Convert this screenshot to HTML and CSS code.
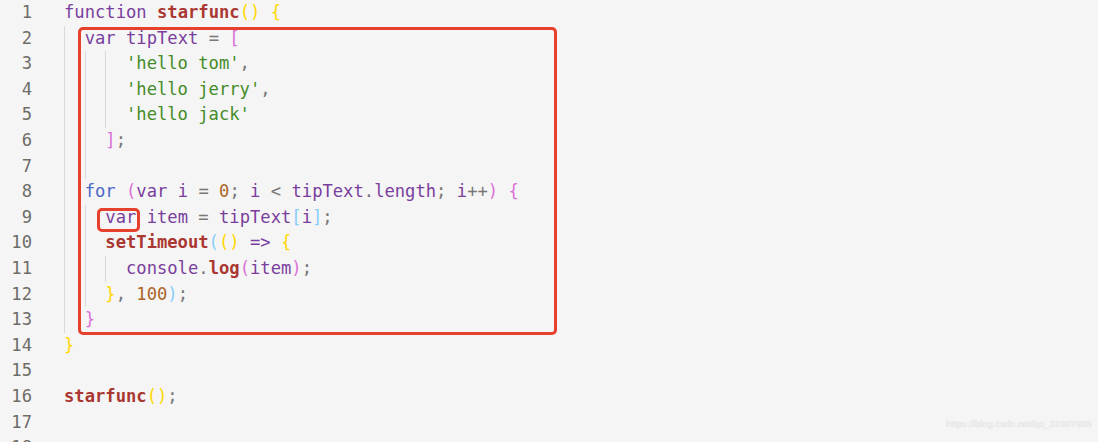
FILE: index.html
```html
<!DOCTYPE html>
<html>
<head>
<meta charset="utf-8">
<link rel="stylesheet" href="styles.css">
</head>
<body>
<div class="editor">
  <div class="ln"><span class="no">1</span><span class="code"><span class="kw">function</span> <span class="fn">starfunc</span><span class="b1">()</span> <span class="b1">{</span></span></div>
  <div class="ln"><span class="no">2</span><span class="code"><span class="ind">  </span><span class="kw">var</span> <span class="kw">tipText</span> <span class="op">=</span> <span class="b2">[</span></span></div>
  <div class="ln"><span class="no">3</span><span class="code"><span class="ind">  </span><span class="ind">  </span><span class="ind">  </span><span class="str">'hello tom'</span><span class="op">,</span></span></div>
  <div class="ln"><span class="no">4</span><span class="code"><span class="ind">  </span><span class="ind">  </span><span class="ind">  </span><span class="str">'hello jerry'</span><span class="op">,</span></span></div>
  <div class="ln"><span class="no">5</span><span class="code"><span class="ind">  </span><span class="ind">  </span><span class="ind">  </span><span class="str">'hello jack'</span></span></div>
  <div class="ln"><span class="no">6</span><span class="code"><span class="ind">  </span><span class="ind">  </span><span class="b2">]</span><span class="op">;</span></span></div>
  <div class="ln"><span class="no">7</span><span class="code"><span class="ind">  </span><span class="ind">  </span></span></div>
  <div class="ln"><span class="no">8</span><span class="code"><span class="ind">  </span><span class="ctl">for</span> <span class="b2">(</span><span class="kw">var</span> <span class="kw">i</span> <span class="op">=</span> <span class="num">0</span><span class="op">;</span> <span class="kw">i</span> <span class="op">&lt;</span> <span class="kw">tipText</span><span class="op">.</span><span class="kw">length</span><span class="op">;</span> <span class="kw">i</span><span class="op">++</span><span class="b2">)</span> <span class="b2">{</span></span></div>
  <div class="ln"><span class="no">9</span><span class="code"><span class="ind">  </span><span class="ind">  </span><span class="kw">var</span> <span class="kw">item</span> <span class="op">=</span> <span class="kw">tipText</span><span class="b3">[</span><span class="kw">i</span><span class="b3">]</span><span class="op">;</span></span></div>
  <div class="ln"><span class="no">10</span><span class="code"><span class="ind">  </span><span class="ind">  </span><span class="fn">setTimeout</span><span class="b3">(</span><span class="b1">()</span> <span class="kw">=&gt;</span> <span class="b1">{</span></span></div>
  <div class="ln"><span class="no">11</span><span class="code"><span class="ind">  </span><span class="ind">  </span><span class="ind">  </span><span class="kw">console</span><span class="op">.</span><span class="fn">log</span><span class="b2">(</span><span class="kw">item</span><span class="b2">)</span><span class="op">;</span></span></div>
  <div class="ln"><span class="no">12</span><span class="code"><span class="ind">  </span><span class="ind">  </span><span class="b1">}</span><span class="op">,</span> <span class="num">100</span><span class="b3">)</span><span class="op">;</span></span></div>
  <div class="ln"><span class="no">13</span><span class="code"><span class="ind">  </span><span class="b2">}</span></span></div>
  <div class="ln"><span class="no">14</span><span class="code"><span class="b1">}</span></span></div>
  <div class="ln"><span class="no">15</span><span class="code"></span></div>
  <div class="ln"><span class="no">16</span><span class="code"><span class="fn">starfunc</span><span class="b1">()</span><span class="op">;</span></span></div>
  <div class="ln"><span class="no">17</span><span class="code"></span></div>
  <div class="ln"><span class="no">18</span><span class="code"></span></div>
  <div class="mark mark-big"></div>
  <div class="mark mark-small"></div>
  <div class="watermark">https://blog.csdn.net/qq_31907985</div>
</div>
</body>
</html>
```

FILE: styles.css
```css
html, body {
  margin: 0;
  padding: 0;
  background: #f5f5f5;
  overflow: hidden;
}

.editor {
  position: relative;
  width: 1098px;
  height: 442px;
  overflow: hidden;
  font-family: "DejaVu Sans Mono", monospace;
  font-size: 17.16px;
  line-height: 25.6px;
  color: #777777;
}

.ln {
  display: flex;
  height: 25.6px;
}

.no {
  width: 32px;
  flex: none;
  text-align: right;
  color: #6d6d68;
}

.code {
  padding-left: 32px;
  white-space: pre;
}

.ind {
  display: inline-block;
  width: 2ch;
  height: 25.6px;
  vertical-align: top;
  box-shadow: inset 1px 0 0 #d9d9d9;
}

.kw { color: #7a3e9d; }
.ctl { color: #4b69c6; }
.fn { color: #aa3731; font-weight: bold; }
.str { color: #448c27; }
.num { color: #ab6526; }
.op { color: #777777; }
.b1 { color: #ffd700; }
.b2 { color: #da70d6; }
.b3 { color: #87cefa; }

.mark {
  position: absolute;
  box-sizing: border-box;
  border: 3px solid #e5412d;
  border-radius: 5px;
}

.mark-big {
  left: 78px;
  top: 27px;
  width: 479px;
  height: 308px;
}

.mark-small {
  left: 97px;
  top: 208px;
  width: 43px;
  height: 24px;
  border-radius: 5px;
}

.watermark {
  position: absolute;
  right: 6px;
  bottom: 5px;
  font-family: "Liberation Sans", sans-serif;
  font-size: 9.5px;
  color: #ececec;
  text-shadow: 0 0 1px #d6d6d6;
}
```
